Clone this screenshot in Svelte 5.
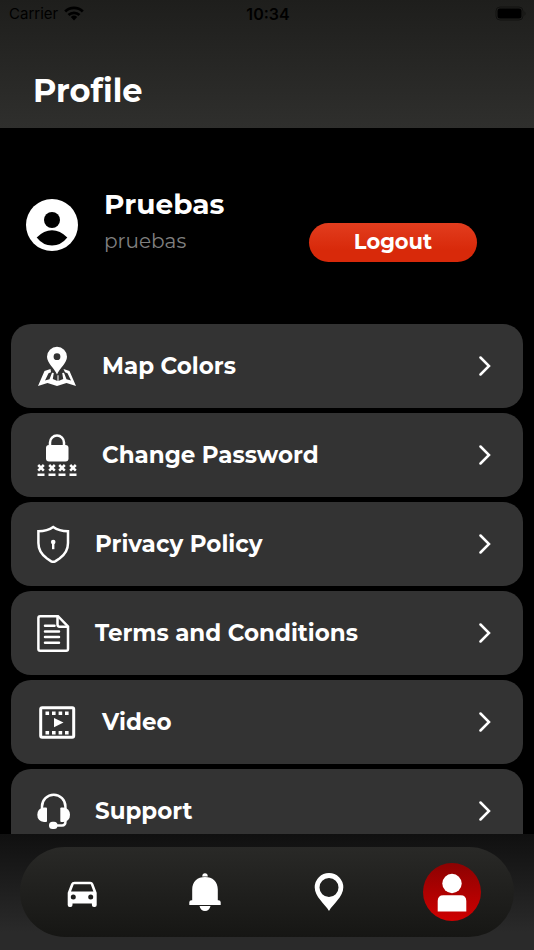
<script lang="ts">
  type IconName = 'map' | 'password' | 'shield' | 'document' | 'video' | 'support'

  interface MenuItem {
    label: string
    icon: IconName
    narrow?: boolean
  }

  const menu: MenuItem[] = [
    { label: 'Map Colors', icon: 'map' },
    { label: 'Change Password', icon: 'password' },
    { label: 'Privacy Policy', icon: 'shield', narrow: true },
    { label: 'Terms and Conditions', icon: 'document', narrow: true },
    { label: 'Video', icon: 'video' },
    { label: 'Support', icon: 'support', narrow: true },
  ]

  const columns = [4, 15, 25, 36]
</script>

<div class="screen">
  <header class="header">
    <div class="status">
      <div class="status__carrier">
        <span>Carrier</span>
        <svg width="20" height="15" viewBox="0 0 20 15" aria-hidden="true">
          <g fill="none" stroke="#000" stroke-width="2.8">
            <path d="M1.2 5.4a12.6 12.6 0 0 1 17.6 0" />
            <path d="M4.5 9a8 8 0 0 1 11 0" />
          </g>
          <path d="M10 14.4l-3.2-3.3a4.7 4.7 0 0 1 6.4 0z" />
        </svg>
      </div>
      <span class="status__time">10:34</span>
      <div class="status__battery">
        <svg width="32" height="15" viewBox="0 0 32 15" aria-hidden="true">
          <rect x="1" y="1" width="27" height="13" rx="4" fill="none" stroke="#121211" />
          <rect x="2.5" y="2.5" width="24" height="10" rx="2.5" />
          <path d="M29.5 5.2q2 2.3 0 4.6z" fill="#121211" />
        </svg>
      </div>
    </div>
    <h1>Profile</h1>
  </header>

  <main>
    <section class="account">
      <svg class="account__avatar" viewBox="0 0 52 52" aria-hidden="true">
        <circle cx="26" cy="26" r="26" fill="#fff" />
        <circle cx="26" cy="21" r="8" />
        <path d="M10.7 38.5Q18 31.3 26 31.3t15.3 7.2Q35 46.500 26 46.500t-15.300-8z" />
      </svg>
      <div class="account__names">
        <h2>Pruebas</h2>
        <p>pruebas</p>
      </div>
      <button class="account__logout">Logout</button>
    </section>

    <ul class="menu">
      {#each menu as item}
        <li>
          <button class="menu__item">
            <svg
              class="menu__icon"
              class:menu__icon--narrow={item.narrow}
              viewBox="0 0 {item.narrow ? 33 : 40} 44"
              aria-hidden="true"
            >
              {#if item.icon === 'map'}
                <path
                  fill-rule="evenodd"
                  d="M20 30.5C17.5 24.5 10 19 10 12.8a10 10 0 0 1 20 0C30 19 22.5 24.5 20 30.5zM20 9.3a3.4 3.4 0 1 0 0 6.8 3.4 3.4 0 0 0 0-6.8z"
                />
                <path
                  d="M13.5 25L7.5 27 1 42l9.5-3 9.5 3 9.500-3 9.500 3-6.500-15-6-2 1.500 3.200 2.500 1 3.500 7.300-4.500-1.200-2.500-6.500-1.800.3 1 5.800-4.700 2v-5.700h-1v5.700l-4.700-2 1-5.800-1.800-.3-2.500 6.500-4.500 1.200 3.500-7.300 2.500-1z"
                />
              {:else if item.icon === 'password'}
                <path class="stroke" d="M13 14V9.500a7 7 0 0 1 14 0V14" />
                <rect x="9" y="12" width="22.500" height="16.500" rx="3" />
                {#each columns as x}
                  <path class="stroke" d="M{x - 2.8} 32l5.6 5.6M{x + 2.8} 32l-5.6 5.600M{x - 3.5} 41.700h7" />
                {/each}
              {:else if item.icon === 'shield'}
                <path
                  class="stroke"
                  d="M16.2 5Q22 9.2 31 9.3V21c0 8-3.5 12-8.5 15.5l-4.300 2.800q-2 1-4 0L10 36.500C5 33 1.400 29 1.400 21V9.300Q10.500 9.200 16.200 5z"
                />
                <circle cx="16.2" cy="20" r="2.3" />
                <path d="M15 20h2.4v7.2H15z" />
              {:else if item.icon === 'document'}
                <path class="stroke" d="M3.2 5.2H21L31 15.5V38q0 1.800-1.800 1.800h-26Q1.400 39.800 1.400 38V7q0-1.800 1.800-1.800z" />
                <path class="stroke" d="M20.500 5.500v8q0 2.200 2.200 2.200H31" />
                <path class="stroke stroke--round" d="M8 14.700h9.500M8 20.400h14M8 26h14M8 31.700h14" />
              {:else if item.icon === 'video'}
                <rect class="stroke stroke--wide" x="3.700" y="7.700" width="33" height="29.600" rx="1.500" />
                <path d="M17 18l9.500 4.600L17 27.300z" />
                <path
                  d="M8.500 11.500h3.600V15H8.500zM15 11.500h3.600V15H15zM21.600 11.500h3.600V15h-3.600zM28 11.500h3.600V15H28zM8.500 31h3.600v3.500H8.500zM15 31h3.600v3.500H15zM21.600 31h3.600v3.500h-3.600zM28 31h3.600v3.500H28z"
                />
              {:else}
                <path class="stroke" d="M5 20v-2.500a11.700 11.700 0 0 1 23.400 0V20" />
                <path d="M7 18.500h2q1 0 1 1V32q0 1-1 1H7q-6.700-1-6.700-7.200T7 18.500z" />
                <path d="M26.300 18.500h-2q-1 0-1 1V32q0 1 1 1h2q6.700-1 6.700-7.200t-6.700-7.300z" />
                <path class="stroke" d="M19 36.500h6q3.500 0 3.500-4.500" />
                <rect x="12" y="32.700" width="8.500" height="7.400" rx="3.500" />
              {/if}
            </svg>
            <span class="menu__label">{item.label}</span>
            <svg class="menu__chevron" viewBox="0 0 12 20" aria-hidden="true">
              <path d="M1.500 1.500L10 10l-8.500 8.500" />
            </svg>
          </button>
        </li>
      {/each}
    </ul>
  </main>

  <nav class="tabs" aria-label="Main">
    <div class="tabs__bar">
      <a href="#cars" aria-label="Cars">
        <svg viewBox="0 0 40 44" aria-hidden="true">
          <path
            fill-rule="evenodd"
            d="M12.500 11.700h15.800q2.200 0 3 2.100l3.400 9V35q0 2-2 2h-.8q-2 0-2-2v-1.500H10.500V35q0 2-2 2h-.8q-2 0-2-2V22.800l3.400-9q.8-2.100 3.400-2.100zM11.800 14.300L9 21.600h22.400l-2.700-7.300zM11.300 24.600a2.500 2.500 0 1 0 0 5 2.500 2.500 0 0 0 0-5zM28.700 24.600a2.500 2.500 0 1 0 0 5 2.500 2.500 0 0 0 0-5z"
          />
        </svg>
      </a>
      <a href="#alerts" aria-label="Alerts">
        <svg viewBox="0 0 40 44" aria-hidden="true">
          <path d="M17.200 6.500Q17.400 3.200 20 3.200t2.800 3.300z" />
          <path d="M7.200 30.200V19.500C7.200 11.500 12.500 7 20 7s12.800 4.500 12.800 12.500v10.700h.7q2.200 0 2.200 2V35H4.300v-2.800q0-2 2.200-2z" />
          <path d="M14.500 36h11q-1.200 5-5.500 5t-5.500-5z" />
        </svg>
      </a>
      <a href="#places" aria-label="Places">
        <svg viewBox="0 0 40 44" aria-hidden="true">
          <path
            fill-rule="evenodd"
            d="M20 41C16 34 5.700 27 5.700 17.300a14.300 14.300 0 0 1 28.600 0C34.300 27 24 34 20 41zM20 8a9.500 9.500 0 1 0 0 19 9.500 9.500 0 0 0 0-19z"
          />
        </svg>
      </a>
      <a class="active" href="#profile" aria-label="Profile" aria-current="page">
        <svg viewBox="0 0 40 44" aria-hidden="true">
          <circle cx="20" cy="13.500" r="9.700" />
          <path d="M5.700 41.500V31q0-5.700 5.700-5.700h17.200q5.700 0 5.700 5.700v10.500z" />
        </svg>
      </a>
    </div>
  </nav>
</div>

<style>
  :global(body) {
    margin: 0;
    background: #000;
  }

  .screen {
    display: flex;
    flex-direction: column;
    height: 100vh;
    background: #000;
    color: #fff;
    font-family: Montserrat, Inter, sans-serif;
  }

  h1,
  h2,
  p,
  ul {
    margin: 0;
    padding: 0;
  }

  button {
    border: none;
    font: inherit;
    color: inherit;
    cursor: pointer;
  }

  .header {
    flex: none;
    height: 128px;
    background: linear-gradient(#1e1e1c, #2f2f2d);
  }

  .status {
    display: grid;
    grid-template-columns: 1fr auto 1fr;
    align-items: center;
    height: 27px;
    padding: 0 7px 0 9px;
    color: #000;
    font: 400 15px/20px Inter, sans-serif;
  }

  .status__carrier {
    display: flex;
    align-items: center;
    gap: 6px;
  }

  .status__time {
    font-size: 16px;
    font-weight: 600;
  }

  .status__battery {
    display: flex;
    justify-content: flex-end;
  }

  h1 {
    padding: 44px 33px 0;
    font-size: 32px;
    line-height: 40px;
    font-weight: 700;
  }

  main {
    flex: 1;
    min-height: 0;
    overflow: hidden;
  }

  .account {
    display: flex;
    align-items: center;
    height: 196px;
    padding: 0 57px 2px 26px;
    box-sizing: border-box;
  }

  .account__avatar {
    width: 52px;
    height: 52px;
  }

  .account__names {
    flex: 1;
    padding: 0 0 8px 26px;
  }

  h2 {
    font-size: 28px;
    line-height: 40px;
    font-weight: 700;
  }

  .account__names p {
    color: #808080;
    font-size: 20px;
    line-height: 34px;
    font-weight: 400;
  }

  .account__logout {
    width: 168px;
    height: 39px;
    margin-top: 34px;
    border-radius: 20px;
    background: linear-gradient(#e23d1e, #d8290a 70%);
    font-size: 21px;
    line-height: 24px;
    font-weight: 700;
  }

  .menu {
    display: flex;
    flex-direction: column;
    gap: 5px;
    padding: 0 11px;
    list-style: none;
  }

  .menu__item {
    display: flex;
    align-items: center;
    width: 100%;
    height: 84px;
    padding: 0 32px 0 26px;
    border-radius: 20px;
    background: #333;
    text-align: left;
  }

  .menu__icon {
    width: 40px;
    height: 44px;
    fill: #fff;
  }

  .menu__icon--narrow {
    width: 33px;
  }

  .stroke {
    fill: none;
    stroke: #fff;
    stroke-width: 2.5;
  }

  .stroke--round {
    stroke-linecap: round;
  }

  .stroke--wide {
    stroke-width: 3;
  }

  .menu__label {
    flex: 1;
    padding-left: 25px;
    font-size: 23px;
    line-height: 32px;
    font-weight: 700;
  }

  .menu__chevron {
    width: 12px;
    height: 20px;
    fill: none;
    stroke: #fff;
    stroke-width: 2.5;
    stroke-linecap: round;
  }

  .tabs {
    flex: none;
    padding: 13px 20px;
    background: linear-gradient(#101010, #2a2a2a 85%);
  }

  .tabs__bar {
    display: grid;
    grid-template-columns: repeat(4, 1fr);
    place-items: center;
    height: 90px;
    border-radius: 45px;
    background: linear-gradient(#292927, #161614);
  }

  .tabs a {
    display: grid;
    place-items: center;
    width: 58px;
    height: 58px;
    border-radius: 50%;
  }

  .tabs svg {
    width: 40px;
    height: 44px;
    fill: #fff;
  }

  .tabs .active {
    background: linear-gradient(#8c0202, #cf0000);
  }
</style>
